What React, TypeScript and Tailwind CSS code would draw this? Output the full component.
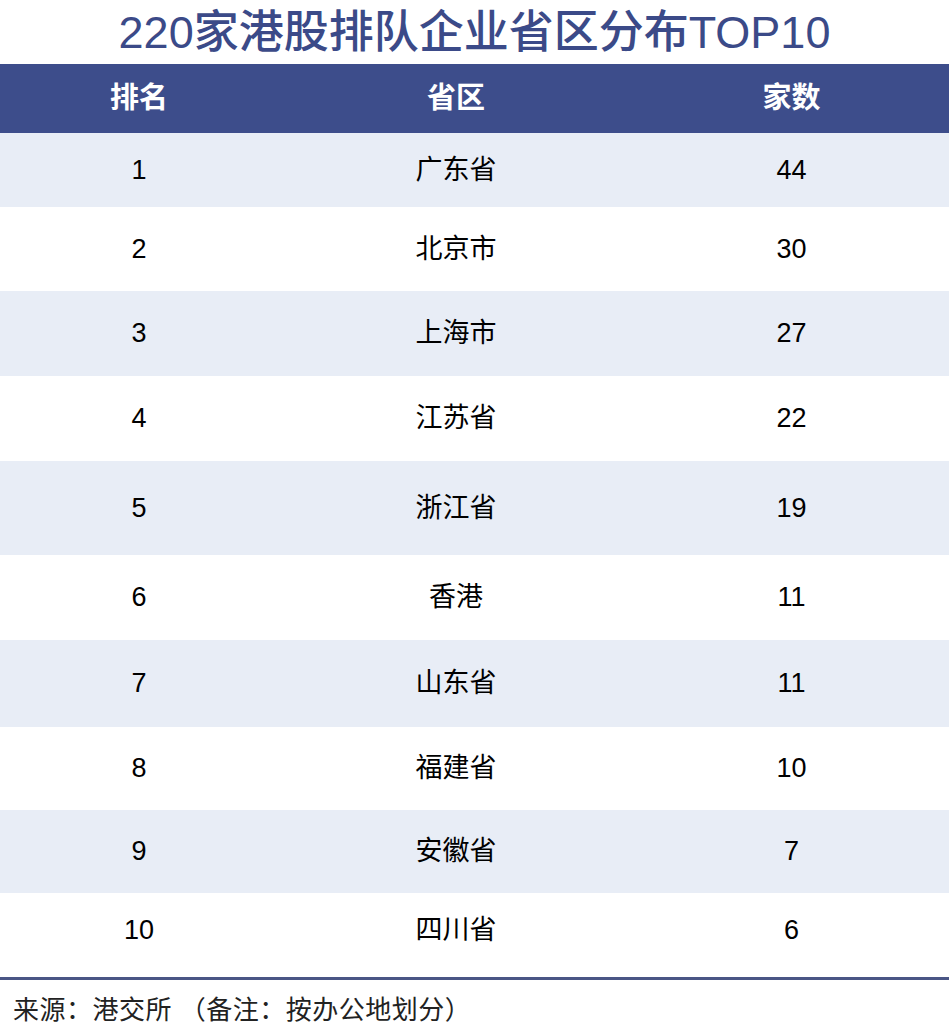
const rows = [
  { rank: '1', province: '广东省', count: '44', h: 'h-[74px]', bg: 'bg-[#e8edf6]' },
  { rank: '2', province: '北京市', count: '30', h: 'h-[84px]', bg: 'bg-white' },
  { rank: '3', province: '上海市', count: '27', h: 'h-[85px]', bg: 'bg-[#e8edf6]' },
  { rank: '4', province: '江苏省', count: '22', h: 'h-[85px]', bg: 'bg-white' },
  { rank: '5', province: '浙江省', count: '19', h: 'h-[94px]', bg: 'bg-[#e8edf6]' },
  { rank: '6', province: '香港', count: '11', h: 'h-[85px]', bg: 'bg-white' },
  { rank: '7', province: '山东省', count: '11', h: 'h-[87px]', bg: 'bg-[#e8edf6]' },
  { rank: '8', province: '福建省', count: '10', h: 'h-[83px]', bg: 'bg-white' },
  { rank: '9', province: '安徽省', count: '7', h: 'h-[83px]', bg: 'bg-[#e8edf6]' },
  { rank: '10', province: '四川省', count: '6', h: 'h-[84px] pb-[10px]', bg: 'bg-white' },
]

const font = "font-['Liberation_Sans','Noto_Sans_CJK_SC',sans-serif]"

export default function App() {
  return (
    <div className={`w-[949px] h-[1033px] bg-white ${font} overflow-hidden`}>
      {/* Title */}
      <div className="h-[64px] flex items-center justify-center">
        <h1 className="text-[45px] leading-none font-medium text-[#3b4a88]">
          220家港股排队企业省区分布TOP10
        </h1>
      </div>

      {/* Header */}
      <div className="grid grid-cols-[278px_356px_315px] h-[69px] bg-[#3d4d8b] text-white text-[29px] font-bold items-center text-center">
        <div>排名</div>
        <div>省区</div>
        <div>家数</div>
      </div>

      {/* Rows */}
      {rows.map((r) => (
        <div
          key={r.rank}
          className={`grid grid-cols-[278px_356px_315px] items-center text-center text-[27px] text-black ${r.h} ${r.bg}`}
        >
          <div>{r.rank}</div>
          <div>{r.province}</div>
          <div>{r.count}</div>
        </div>
      ))}

      <div className="h-[3px] bg-[#4a5685]" />

      {/* Footer */}
      <div className="pl-[13px] pt-[11px] text-[26px] tracking-[0.5px] text-[#222]">
        来源：港交所 （备注：按办公地划分）
      </div>
    </div>
  )
}
